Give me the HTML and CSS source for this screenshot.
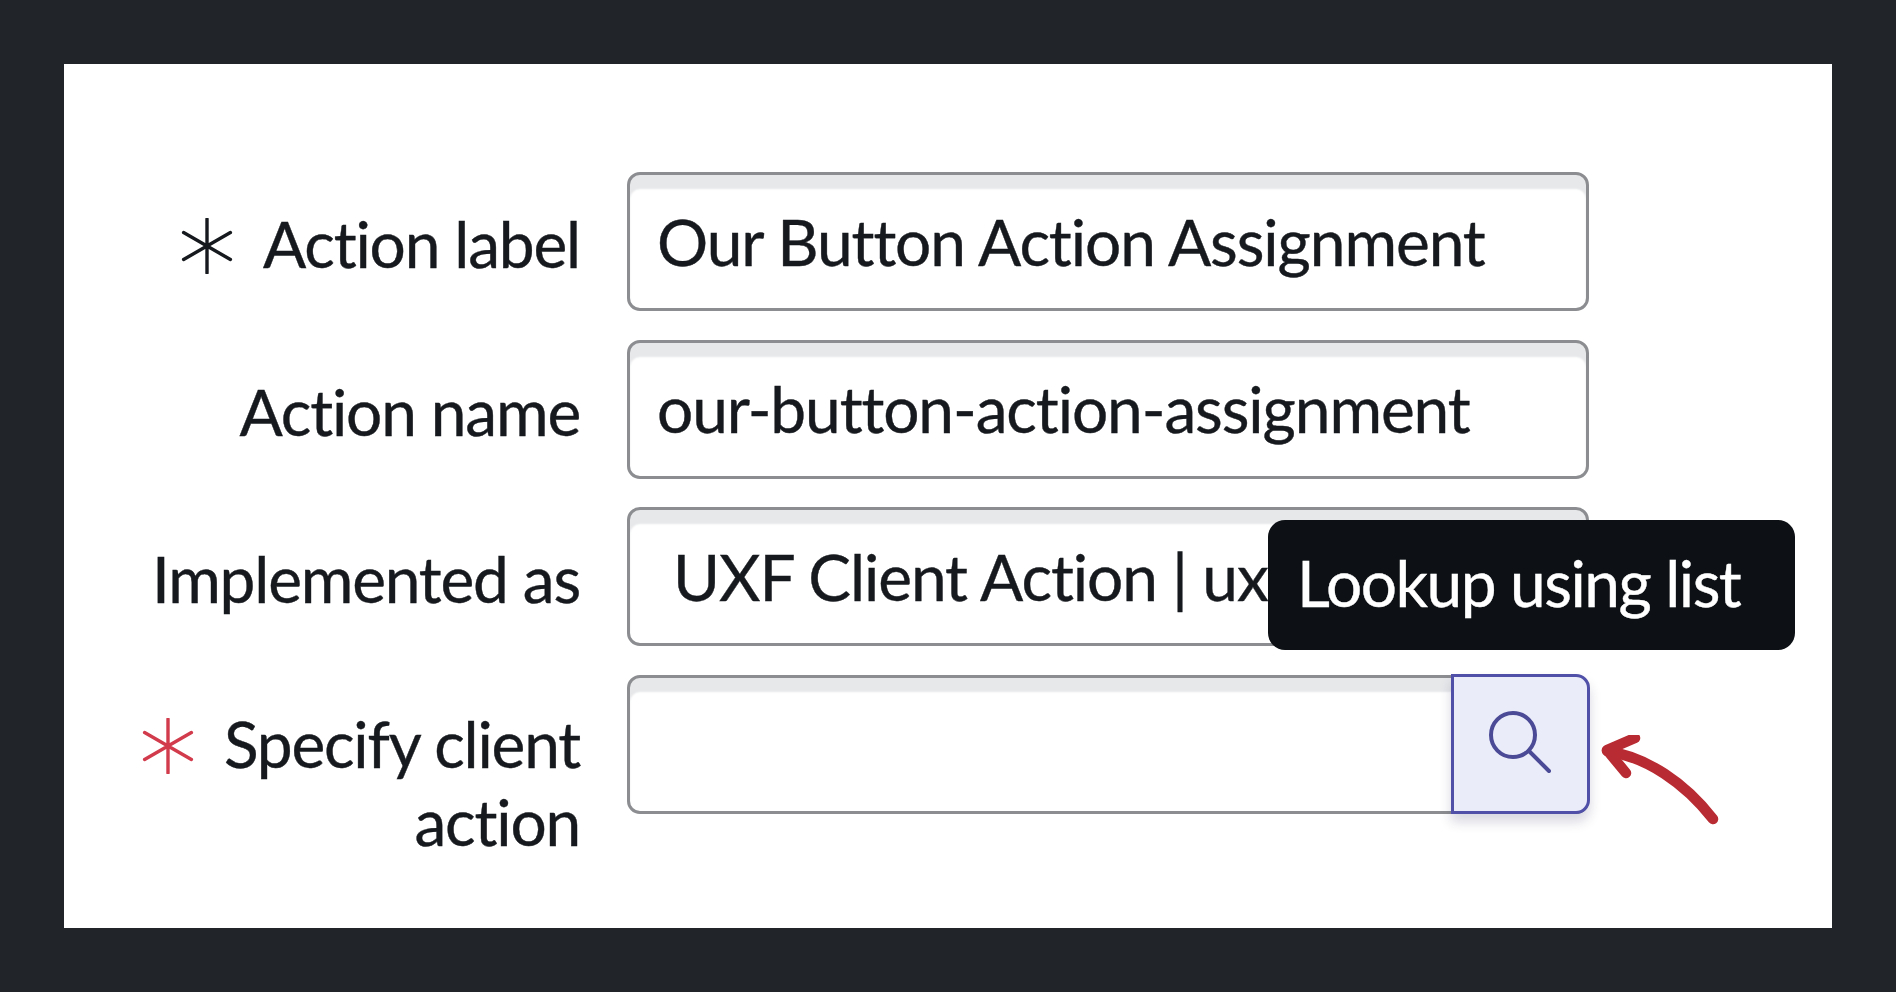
FILE: index.html
```html
<!DOCTYPE html>
<html lang="en">
<head>
<meta charset="utf-8">
<title>Action form</title>
<link rel="stylesheet" href="styles.css">
</head>
<body>
<main class="card">
  <form class="form">
    <div class="label"><svg class="star" viewBox="0 0 56 56"><path d="M28 1V55M4.6 14.5L51.4 41.5M4.6 41.5L51.4 14.5"/></svg>Action label</div>
    <div class="field"><span class="value">Our Button Action Assignment</span></div>

    <div class="label">Action name</div>
    <div class="field"><span class="value">our-button-action-assignment</span></div>

    <div class="label">Implemented as</div>
    <div class="field field-readonly">
      <span class="value">UXF Client Action | uxf_client_action</span>
      <div class="tooltip">Lookup using list</div>
    </div>

    <div class="label label-wrap"><svg class="star star-required" viewBox="0 0 56 56"><path d="M28 1V55M4.6 14.5L51.4 41.5M4.6 41.5L51.4 14.5"/></svg>Specify client action</div>
    <div class="field field-lookup">
      <button class="lookup" type="button" aria-label="Lookup using list">
        <svg class="search" viewBox="0 0 64 64"><circle cx="26" cy="24" r="22"/><path d="M42 40L62 60"/></svg>
      </button>
      <svg class="arrow" viewBox="0 0 120 90"><path class="arrow-line" d="M6 16C46 22 84 48 112 84"/><path class="arrow-head" d="M34 3L6 15L25 38"/></svg>
    </div>
  </form>
</main>
</body>
</html>
```
FILE: styles.css
```css
* { box-sizing: border-box; }
html, body { height: 100%; }
body {
  margin: 0;
  padding: 64px;
  background: #212529;
  font-family: Lato, "Noto Sans", sans-serif;
  color: #16191d;
  -webkit-text-stroke: 0.4px currentColor;
}
.card {
  height: 864px;
  background: #fff;
  padding: 108px 0 0 64px;
}
.form {
  display: grid;
  grid-template-columns: 452px 962px;
  column-gap: 47px;
  row-gap: 28.5px;
}
.label {
  font-size: 64px;
  line-height: 78px;
  letter-spacing: -1.2px;
  text-align: right;
  padding-top: 33.4px;
}
.label-wrap { padding-top: 30.4px; }
.star {
  display: inline-block;
  width: 56px;
  height: 56px;
  margin-right: 28px;
  vertical-align: -6px;
  fill: none;
  stroke: #16191d;
  stroke-width: 3.4;
  stroke-linecap: round;
}
.star-required { stroke: #d13b4b; }
.field {
  position: relative;
  height: 139px;
  border: 3.5px solid #8b8d90;
  border-radius: 13px;
  background: #fff;
  box-shadow: inset 0 14px 2px #e7e8ea;
  padding: 27.5px 0 0 27px;
  font-size: 64px;
  line-height: 78px;
  letter-spacing: -1.1px;
}
.value {
  display: block;
  width: 880px;
  white-space: nowrap;
  overflow: hidden;
}
.field-readonly { padding-left: 43px; }
.field-readonly .value { width: 620px; }
.tooltip {
  position: absolute;
  left: 638px;
  top: 9.5px;
  width: 527px;
  height: 130px;
  padding: 24px 0 0 29px;
  border-radius: 17px;
  background: #0d1014;
  color: #fff;
  letter-spacing: -1.5px;
}
.field-lookup { padding: 0; }
.lookup {
  position: absolute;
  right: -3.5px;
  top: -3.5px;
  bottom: -3.5px;
  width: 139px;
  padding: 0 3px 3px 0;
  border: 3.5px solid #5050a8;
  border-radius: 0 14px 14px 0;
  background: #ebecf9;
  box-shadow: 0 8px 12px rgba(40, 40, 90, .18);
  display: flex;
  align-items: center;
  justify-content: center;
}
.search {
  width: 64px;
  height: 64px;
  fill: none;
  stroke: #4a4a96;
  stroke-width: 4;
  stroke-linecap: round;
}
.arrow {
  position: absolute;
  left: 971px;
  top: 57px;
  width: 120px;
  height: 90px;
  fill: none;
  stroke: #b92b32;
  stroke-width: 10.5;
  stroke-linecap: round;
  stroke-linejoin: round;
}
```
